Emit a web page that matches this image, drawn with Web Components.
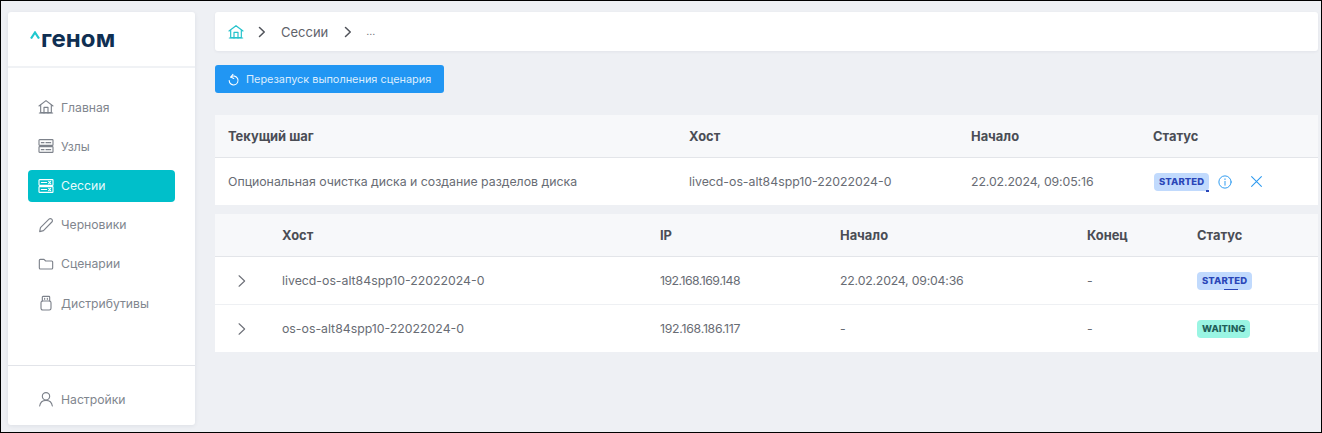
<!DOCTYPE html>
<html>
<head>
<meta charset="utf-8">
<style>
  html, body { margin: 0; height: 100%; }
  body { font-family: Inter, "Liberation Sans", sans-serif; overflow: hidden; }
</style>
</head>
<body>
<app-shell>
  <side-nav slot="nav">
    <nav-item icon="home">Главная</nav-item>
    <nav-item icon="nodes">Узлы</nav-item>
    <nav-item icon="sessions" active>Сессии</nav-item>
    <nav-item icon="pencil">Черновики</nav-item>
    <nav-item icon="folder">Сценарии</nav-item>
    <nav-item icon="usb">Дистрибутивы</nav-item>
    <nav-item slot="bottom" icon="user">Настройки</nav-item>
  </side-nav>
  <crumb-bar></crumb-bar>
  <restart-button>Перезапуск выполнения сценария</restart-button>
  <step-table></step-table>
  <host-table></host-table>
</app-shell>

<script>
/* Stroke icons, all on a 24 box */
var Icons = {
  home: '<path d="M1.500 10.500 12 2.500l10.500 8"/><path d="M4 9.500v11h16v-11"/><path d="M2 21h20"/><path d="M9 21v-8.500h6V21"/>',
  nodes: '<rect x="1.500" y="2.500" width="21" height="8.500" rx="1"/><rect x="1.500" y="13" width="21" height="8.500" rx="1"/><path d="M5 7h4M5 17.500h4M12 7h7M12 17.500h7" stroke-dasharray="2 1"/>',
  sessions: '<rect x="1.500" y="2.500" width="21" height="8.500" rx="1"/><rect x="1.500" y="13" width="21" height="8.500" rx="1"/><path d="M5 6.800h8M5 17.300h8"/><path d="m16 5 3 3.500m0-3.500-3 3.500M16 15.500l3 3.500m0-3.500-3 3.500"/>',
  pencil: '<path d="M2.500 22l1.200-6L16.500 3.200a2.800 2.800 0 0 1 4 0l.3.300a2.800 2.800 0 0 1 0 4L8.200 20.500z"/>',
  folder: '<path d="M2 6.500A1.500 1.500 0 0 1 3.500 5h5.500l2.500 2.500h9A1.500 1.500 0 0 1 22 9v9a1.500 1.500 0 0 1-1.500 1.500h-17A1.500 1.500 0 0 1 2 18z"/>',
  usb: '<path d="M6.500 9V3a1 1 0 0 1 1-1h9a1 1 0 0 1 1 1v6"/><rect x="4.500" y="9" width="15" height="13.500" rx="2.500"/><path d="M10 5v1.500M14 5v1.500"/>',
  user: '<circle cx="12" cy="8" r="5.500"/><path d="M2.500 22.500c.8-5.500 4.300-8.500 9.500-8.500s8.700 3 9.500 8.500"/>',
  chevron: '<path d="m7 3 9.500 9-9.500 9"/>',
  restart: '<path d="M7 7.500A8.200 8.200 0 1 1 4 14"/><path d="M11 2.500 7 7.500l5.500 2.500"/>',
  info: '<circle cx="12" cy="12" r="10.500"/><path d="M12 11v6.500M12 6.500v1.500"/>',
  close: '<path d="m3 3 18 18M21 3 3 21"/>'
}

function icon(name, size, color, width = 2) {
  return `<svg width="${size}" height="${size}" viewBox="0 0 24 24" fill="none" stroke="${color}" stroke-width="${width}" stroke-linecap="round" stroke-linejoin="round" style="display:block;flex:none">${Icons[name]}</svg>`
}

/* Small base class so every element just hands over its shadow markup */
class Shadowed extends HTMLElement {
  constructor() {
    super()
    this.attachShadow({ mode: 'open' })
  }

  connectedCallback() {
    this.shadowRoot.innerHTML = this.render()
  }
}

class AppShell extends Shadowed {
  render() {
    return `
      <style>
        :host {
          display: grid;
          grid-template-columns: 187px 1fr;
          column-gap: 20px;
          box-sizing: border-box;
          width: 1322px;
          height: 433px;
          padding: 11px 3px 7px 7px;
          border: 1px solid #000;
          background: #eef0f4;
        }
        main { display: flex; flex-direction: column; min-width: 0; }
      </style>
      <slot name="nav"></slot>
      <main><slot></slot></main>`
  }
}

class SideNav extends Shadowed {
  render() {
    return `
      <style>
        :host {
          display: flex;
          flex-direction: column;
          background: #fff;
          border-radius: 3px;
          box-shadow: 0 1px 4px rgba(30, 40, 70, .08);
        }
        .logo {
          display: flex;
          align-items: flex-start;
          height: 56px;
          box-sizing: border-box;
          padding: 14px 0 0 22px;
          border-bottom: 2px solid #f0f2f5;
        }
        .logo svg { margin: 5px 1px 0 0; }
        .logo span {
          font-size: 24px;
          line-height: 25px;
          font-weight: 700;
          letter-spacing: .1px;
          color: #0f2f52;
        }
        nav { flex: 1; display: flex; flex-direction: column; padding: 23.200px 20px 0; gap: 7.200px; }
        .bottom { height: 60px; padding: 17px 20px 0; box-sizing: border-box; border-top: 1px solid #e2e4e9; }
      </style>
      <div class="logo">
        <svg width="10" height="8" viewBox="0 0 10 8" fill="none" stroke="#1fc8cf" stroke-width="2.200"><path d="m1 7.500 4-6 4 6"/></svg>
        <span>геном</span>
      </div>
      <nav><slot></slot></nav>
      <div class="bottom"><slot name="bottom"></slot></div>`
  }
}

class NavItem extends Shadowed {
  render() {
    var active = this.hasAttribute('active')
    var color = active ? '#ffffff' : '#7d828b'
    return `
      <style>
        :host {
          display: flex;
          align-items: center;
          gap: 7px;
          height: 32px;
          padding-left: 10px;
          border-radius: 4px;
          font-size: 12.200px;
          color: ${active ? '#e8fbfc' : '#81868e'};
          background: ${active ? '#00bfca' : 'transparent'};
        }
      </style>
      ${icon(this.getAttribute('icon'), 16, color, 1.700)}
      <slot></slot>`
  }
}

class CrumbBar extends Shadowed {
  render() {
    return `
      <style>
        :host {
          display: flex;
          align-items: center;
          height: 39px;
          flex: none;
          padding-left: 13px;
          background: #fff;
          border-radius: 3px;
          font-size: 13px;
          color: #5f636b;
          box-shadow: 0 1px 3px rgba(30, 40, 70, .06);
        }
        .sep { margin: 0 13px 0 12px; }
        .sep + span + .sep { margin: 0 12px 0 14px; }
        .last { font-size: 10.500px; color: #6f737b; }
      </style>
      ${icon('home', 16, '#27c3cc', 1.800)}
      <span class="sep">${icon('chevron', 12, '#4f5259', 3)}</span>
      <span>Сессии</span>
      <span class="sep">${icon('chevron', 12, '#4f5259', 3)}</span>
      <span class="last">...</span>`
  }
}

class RestartButton extends Shadowed {
  render() {
    return `
      <style>
        :host {
          display: flex;
          align-items: center;
          align-self: flex-start;
          gap: 6px;
          height: 28px;
          margin-top: 14px;
          padding: 0 13px 0 12px;
          background: #2196f3;
          border-radius: 3px;
          font-size: 10.900px;
          color: #dcedfd;
        }
      </style>
      ${icon('restart', 13, '#ffffff', 2)}
      <slot></slot>`
  }
}

class StatusTag extends Shadowed {
  render() {
    var waiting = this.getAttribute('kind') == 'waiting'
    return `
      <style>
        :host {
          display: inline-flex;
          align-items: center;
          position: relative;
          height: 18px;
          padding: 0 5px;
          border-radius: 4px;
          font-size: 9.500px;
          font-weight: 800;
          letter-spacing: .08px;
          color: ${waiting ? '#1f5f59' : '#2a46b8'};
          background: ${waiting ? '#9af5e3' : '#c1dafd'};
        }
        i { position: absolute; height: 1px; bottom: 0; background: #2a46b8; }
      </style>
      <slot></slot>
      ${this.hasAttribute('dash') ? `<i style="${this.getAttribute('dash')}"></i>` : ''}`
  }
}

/* Shared table styles. Rows are grids, columns come from --cols on the host */
var tableStyle = `
  :host { display: block; flex: none; background: #fff; }
  .row {
    display: grid;
    grid-template-columns: var(--cols);
    align-items: center;
    font-size: 12.300px;
    color: #686c74;
  }
  .head {
    height: 42px;
    font-size: 12.900px;
    font-weight: 700;
    color: #4a4d55;
    background: #f7f8fa;
    border-bottom: 1px solid #e3e5e9;
  }
  .body { height: 47px; }
  .body + .body { border-top: 1px solid #eef0f3; }
  .cell-status { display: flex; align-items: center; }
`

class StepTable extends Shadowed {
  render() {
    return `
      <style>
        ${tableStyle}
        :host { --cols: 461px 282px 182px 1fr; margin-top: 22px; padding: 0; }
        .row { padding-left: 13px; }
        .cell-status { padding-left: 1px; }
        .actions { display: flex; gap: 18px; margin-left: 9px; }
      </style>
      <div class="row head"><span>Текущий шаг</span><span>Хост</span><span>Начало</span><span>Статус</span></div>
      <div class="row body">
        <span>Опциональная очистка диска и создание разделов диска</span>
        <span>livecd-os-alt84spp10-22022024-0</span>
        <span style="letter-spacing:-.1px">22.02.2024, 09:05:16</span>
        <span class="cell-status">
          <status-tag kind="started" dash="right:0;width:3px;height:2px;bottom:-1px">STARTED</status-tag>
          <span class="actions">${icon('info', 14, '#2f9bf0', 1.700)}${icon('close', 13, '#2f9bf0', 2)}</span>
        </span>
      </div>`
  }
}

class HostTable extends Shadowed {
  render() {
    return `
      <style>
        ${tableStyle}
        :host { --cols: 67px 378px 180px 247px 110px 1fr; margin-top: 9px; }
        .arrow { padding-left: 20px; display: block; }
      </style>
      <div class="row head"><span></span><span>Хост</span><span>IP</span><span>Начало</span><span>Конец</span><span>Статус</span></div>
      <div class="row body">
        <span class="arrow">${icon('chevron', 14, '#6d7078', 1.900)}</span>
        <span>livecd-os-alt84spp10-22022024-0</span>
        <span style="letter-spacing:-.53px">192.168.169.148</span>
        <span style="letter-spacing:-.2px">22.02.2024, 09:04:36</span>
        <span>-</span>
        <span class="cell-status"><status-tag kind="started" dash="left:27px;width:14px;height:1px;bottom:0">STARTED</status-tag></span>
      </div>
      <div class="row body">
        <span class="arrow">${icon('chevron', 14, '#6d7078', 1.900)}</span>
        <span>os-os-alt84spp10-22022024-0</span>
        <span style="letter-spacing:-.27px">192.168.186.117</span>
        <span>-</span>
        <span>-</span>
        <span class="cell-status"><status-tag kind="waiting">WAITING</status-tag></span>
      </div>`
  }
}

window.customElements.define('app-shell', AppShell)
window.customElements.define('side-nav', SideNav)
window.customElements.define('nav-item', NavItem)
window.customElements.define('crumb-bar', CrumbBar)
window.customElements.define('restart-button', RestartButton)
window.customElements.define('status-tag', StatusTag)
window.customElements.define('step-table', StepTable)
window.customElements.define('host-table', HostTable)
</script>
</body>
</html>
